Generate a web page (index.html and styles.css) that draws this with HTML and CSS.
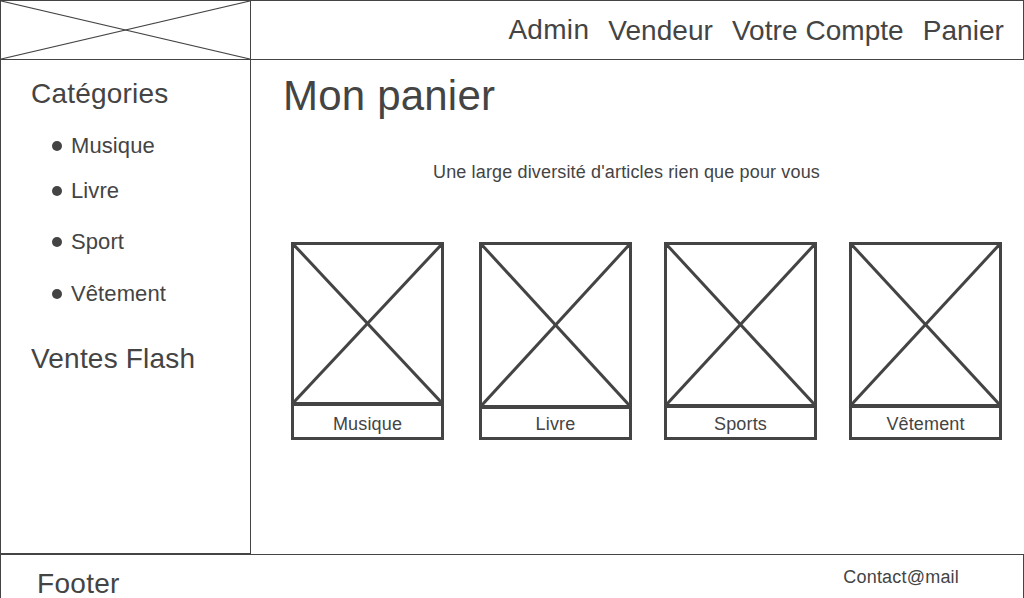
FILE: index.html
```html
<!DOCTYPE html>
<html lang="fr">
<head>
<meta charset="utf-8">
<title>Mon panier</title>
<link rel="stylesheet" href="styles.css">
</head>
<body>
<div class="page">
  <header class="topbar">
    <div class="logo">
      <svg class="xsvg" viewBox="0 0 100 100" preserveAspectRatio="none">
        <line x1="0" y1="0" x2="100" y2="100"/>
        <line x1="100" y1="0" x2="0" y2="100"/>
      </svg>
    </div>
    <nav class="nav">
      <a class="nav-link nav-admin">Admin</a>
      <a class="nav-link">Vendeur</a>
      <a class="nav-link">Votre Compte</a>
      <a class="nav-link">Panier</a>
    </nav>
  </header>

  <div class="middle">
    <aside class="sidebar">
      <h2 class="side-title">Catégories</h2>
      <ul class="cat-list">
        <li class="cat-item">Musique</li>
        <li class="cat-item cat-tight">Livre</li>
        <li class="cat-item">Sport</li>
        <li class="cat-item cat-last">Vêtement</li>
      </ul>
      <h2 class="side-title">Ventes Flash</h2>
    </aside>

    <main class="content">
      <h1 class="page-title">Mon panier</h1>
      <p class="subtitle">Une large diversité d'articles rien que pour vous</p>
      <div class="cards">
        <div class="card">
          <div class="card-img">
            <svg class="xsvg thick" viewBox="0 0 100 100" preserveAspectRatio="none">
              <line x1="0" y1="0" x2="100" y2="100"/>
              <line x1="100" y1="0" x2="0" y2="100"/>
            </svg>
          </div>
          <div class="card-label label-low">Musique</div>
        </div>
        <div class="card card-shift">
          <div class="card-img">
            <svg class="xsvg thick" viewBox="0 0 100 100" preserveAspectRatio="none">
              <line x1="0" y1="0" x2="100" y2="100"/>
              <line x1="100" y1="0" x2="0" y2="100"/>
            </svg>
          </div>
          <div class="card-label label-high">Livre</div>
        </div>
        <div class="card">
          <div class="card-img">
            <svg class="xsvg thick" viewBox="0 0 100 100" preserveAspectRatio="none">
              <line x1="0" y1="0" x2="100" y2="100"/>
              <line x1="100" y1="0" x2="0" y2="100"/>
            </svg>
          </div>
          <div class="card-label">Sports</div>
        </div>
        <div class="card">
          <div class="card-img">
            <svg class="xsvg thick" viewBox="0 0 100 100" preserveAspectRatio="none">
              <line x1="0" y1="0" x2="100" y2="100"/>
              <line x1="100" y1="0" x2="0" y2="100"/>
            </svg>
          </div>
          <div class="card-label">Vêtement</div>
        </div>
      </div>
    </main>
  </div>

  <footer class="footer">
    <div class="footer-title">Footer</div>
    <div class="footer-contact">Contact@mail</div>
  </footer>
</div>
</body>
</html>
```

FILE: styles.css
```css
* {
  box-sizing: border-box;
}

html, body {
  margin: 0;
  padding: 0;
  overflow: hidden;
}

body {
  font-family: "Liberation Sans", Arial, sans-serif;
  color: #444;
  background: #fff;
}

.page {
  width: 1024px;
  height: 598px;
  display: flex;
  flex-direction: column;
}

/* Header */
.topbar {
  display: flex;
  flex: none;
  height: 60px;
  border: 1px solid #444;
}

.logo {
  width: 250px;
  border-right: 1px solid #444;
}

.xsvg {
  display: block;
  width: 100%;
  height: 100%;
}

.xsvg line {
  stroke: #444;
  stroke-width: 1.2;
  vector-effect: non-scaling-stroke;
}

.xsvg.thick line {
  stroke-width: 3;
}

.nav {
  flex: 1;
  display: flex;
  justify-content: flex-end;
  align-items: center;
  gap: 19px;
  padding-right: 19px;
  font-size: 28px;
  line-height: 32px;
}

.nav-link {
  color: #444;
  text-decoration: none;
  padding-top: 2px;
  letter-spacing: 0.05px;
}

.nav-admin {
  padding-top: 0;
  letter-spacing: 0.3px;
}

/* Middle */
.middle {
  display: flex;
  flex: none;
  height: 494px;
}

.sidebar {
  width: 251px;
  border-left: 1px solid #444;
  border-right: 1px solid #444;
  border-bottom: 1px solid #444;
  padding: 18px 0 0 30px;
}

.side-title {
  margin: 0;
  font-size: 28px;
  line-height: 32px;
  font-weight: normal;
  letter-spacing: 0.2px;
}

.cat-list {
  list-style: none;
  margin: 23px 0 36px 0;
  padding: 0 0 0 21px;
  display: flex;
  flex-direction: column;
  gap: 25px;
}

.cat-item {
  display: flex;
  align-items: center;
  font-size: 22px;
  line-height: 26px;
  gap: 9px;
  letter-spacing: 0.1px;
}

.cat-item::before {
  content: "";
  width: 10px;
  height: 10px;
  border-radius: 50%;
  background: #444;
  flex: none;
}

.cat-tight {
  margin-top: -6px;
}

.cat-last {
  margin-top: 1px;
}

.content {
  flex: 1;
  padding: 12px 0 0 32px;
}

.page-title {
  margin: 0;
  font-size: 42px;
  line-height: 48px;
  font-weight: normal;
  letter-spacing: 0.2px;
}

.subtitle {
  margin: 41px 0 0 150px;
  font-size: 18px;
  line-height: 22px;
  letter-spacing: 0.15px;
}

.cards {
  display: flex;
  gap: 32px;
  margin: 59px 0 0 8px;
}

.card {
  width: 153px;
  height: 198px;
  border: 3px solid #444;
  display: flex;
  flex-direction: column;
}

.card-shift {
  margin-left: 3px;
}

.card-img {
  height: 164px;
  border-bottom: 4px solid #444;
}

.card-label {
  flex: 1;
  text-align: center;
  font-size: 18px;
  line-height: 26px;
  padding-top: 3px;
  letter-spacing: 0.15px;
}

.label-low {
  padding-top: 5px;
}

.label-high {
  padding-top: 2px;
}

/* Footer */
.footer {
  flex: none;
  height: 44px;
  display: flex;
  justify-content: space-between;
  align-items: flex-start;
  border-top: 1px solid #444;
  border-left: 1px solid #444;
  border-right: 1px solid #444;
  padding: 11px 64px 0 36px;
}

.footer-title {
  font-size: 28px;
  line-height: 32px;
  margin-top: 2px;
  letter-spacing: 0.3px;
}

.footer-contact {
  font-size: 18px;
  line-height: 22px;
  letter-spacing: 0.2px;
}
```
